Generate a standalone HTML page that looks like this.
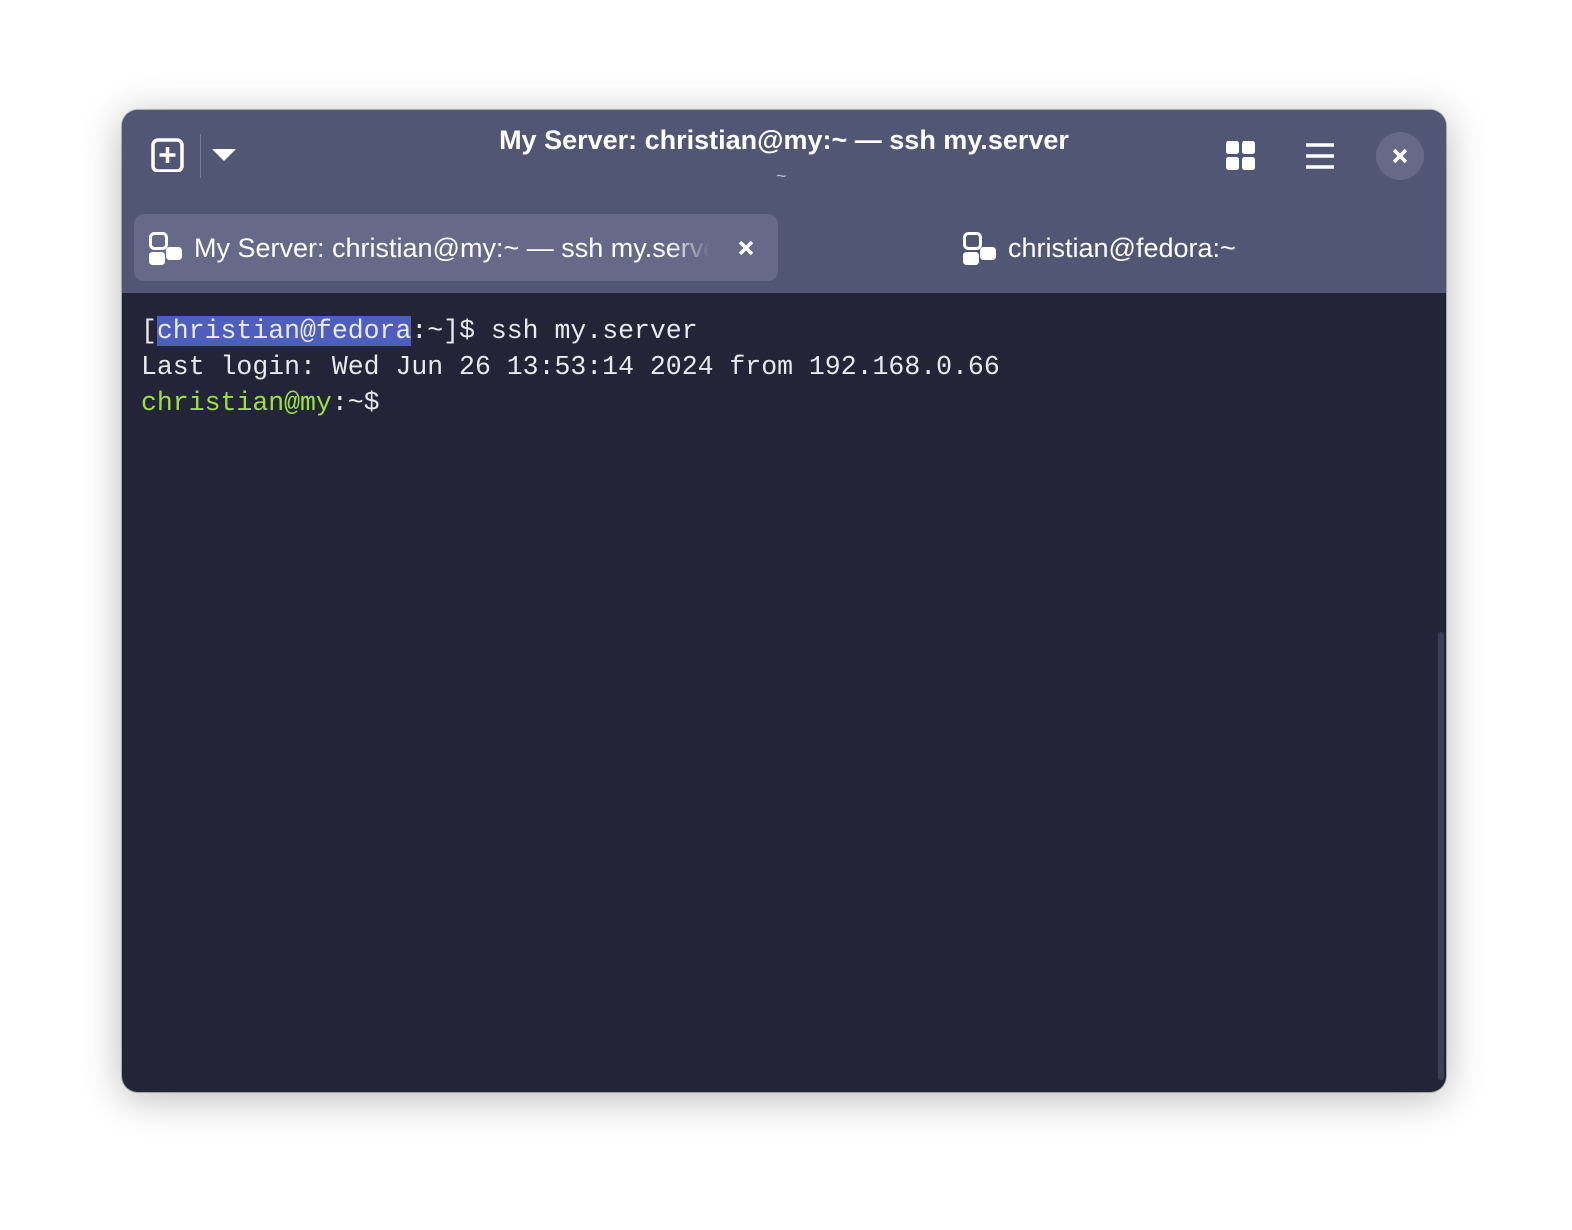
<!DOCTYPE html>
<html><head><style>
body{margin:0;width:1572px;height:1230px;background:#fff;position:relative;overflow:hidden;font-family:"Liberation Sans",sans-serif}
.win{position:absolute;left:122px;top:110px;width:1324px;height:982px;border-radius:16px;overflow:hidden;background:#232438;box-shadow:0 6px 40px rgba(0,0,0,.28),0 0 0 1px rgba(0,0,0,.25)}
.hdr{position:absolute;left:0;top:0;width:100%;height:183px;background:#525675}
.title{position:absolute;left:0;width:100%;text-align:center;color:#fff;font-weight:bold;font-size:27px}
.abs{position:absolute}
.tab{position:absolute;left:12px;top:104px;width:644px;height:67px;border-radius:10px;background:#666a88}
.tabt{position:absolute;color:#fff;font-size:27px;white-space:nowrap}
.term{position:absolute;left:19px;top:203px;font-family:"Liberation Mono",monospace;font-size:26.5px;line-height:36px;color:#e8e8ee;white-space:pre}
.sel{background:#4e5ebc}
.g{color:#9be13c}
</style></head><body>
<div class="win">
<div class="hdr">
 <svg class="abs" style="left:29px;top:28px" width="34" height="34" viewBox="0 0 34 34"><rect x="2" y="2" width="29" height="31" rx="5" fill="none" stroke="#fff" stroke-width="3.5"/><path d="M16.5 9v16M8.5 17h16" stroke="#fff" stroke-width="3.5"/></svg>
 <div class="abs" style="left:78px;top:24px;width:1px;height:44px;background:#7a7e99"></div>
 <svg class="abs" style="left:89px;top:38px" width="26" height="14" viewBox="0 0 26 14"><path d="M1 1h24L13 13z" fill="#fff"/></svg>
 <div class="title" style="top:15px">My Server: christian@my:~ — ssh my.server</div>
 <div class="abs" style="left:654px;top:56px;color:#b9bcd0;font-size:18px">~</div>
 <svg class="abs" style="left:1104px;top:31px" width="30" height="30" viewBox="0 0 30 30"><rect x="0" y="0" width="13" height="13" rx="2.5" fill="#fff"/><rect x="16" y="0" width="13" height="13" rx="2.5" fill="#fff"/><rect x="0" y="16" width="13" height="13" rx="2.5" fill="#fff"/><rect x="16" y="16" width="13" height="13" rx="2.5" fill="#fff"/></svg>
 <svg class="abs" style="left:1184px;top:33px" width="28" height="26" viewBox="0 0 28 26"><path d="M0 2h28M0 13h28M0 24h28" stroke="#fff" stroke-width="3.5"/></svg>
 <div class="abs" style="left:1254px;top:22px;width:48px;height:48px;border-radius:50%;background:#666a88"></div>
 <svg class="abs" style="left:1270px;top:38px" width="16" height="16" viewBox="0 0 16 16"><path d="M2 2l12 12M14 2L2 14" stroke="#fff" stroke-width="3.5"/></svg>
 <div class="tab"></div>
 <svg class="abs" style="left:27px;top:122px" width="33" height="33" viewBox="0 0 33 33"><rect x="1.5" y="1.5" width="16" height="15" rx="4" fill="none" stroke="#fff" stroke-width="3"/><rect x="0" y="20" width="16" height="13" rx="3.5" fill="#fff"/><rect x="17" y="15" width="16" height="13" rx="3.5" fill="#fff"/></svg>
 <div class="tabt" style="left:72px;top:123px;width:516px;overflow:hidden;-webkit-mask-image:linear-gradient(90deg,#000 92%,transparent)">My Server: christian@my:~ — ssh my.server</div>
 <svg class="abs" style="left:616px;top:130px" width="16" height="16" viewBox="0 0 16 16"><path d="M2 2l12 12M14 2L2 14" stroke="#fff" stroke-width="3.5"/></svg>
 <svg class="abs" style="left:841px;top:122px" width="33" height="33" viewBox="0 0 33 33"><rect x="1.5" y="1.5" width="16" height="15" rx="4" fill="none" stroke="#fff" stroke-width="3"/><rect x="0" y="20" width="16" height="13" rx="3.5" fill="#fff"/><rect x="17" y="15" width="16" height="13" rx="3.5" fill="#fff"/></svg>
 <div class="tabt" style="left:886px;top:123px">christian@fedora:~</div>
</div>
<div class="term">[<span class="sel">christian@fedora</span>:~]$ ssh my.server
Last login: Wed Jun 26 13:53:14 2024 from 192.168.0.66
<span class="g">christian@my</span>:~$</div>
<div class="abs" style="left:1316px;top:522px;width:6px;height:448px;border-radius:3px;background:#3d3f55"></div>
</div>
</body></html>
